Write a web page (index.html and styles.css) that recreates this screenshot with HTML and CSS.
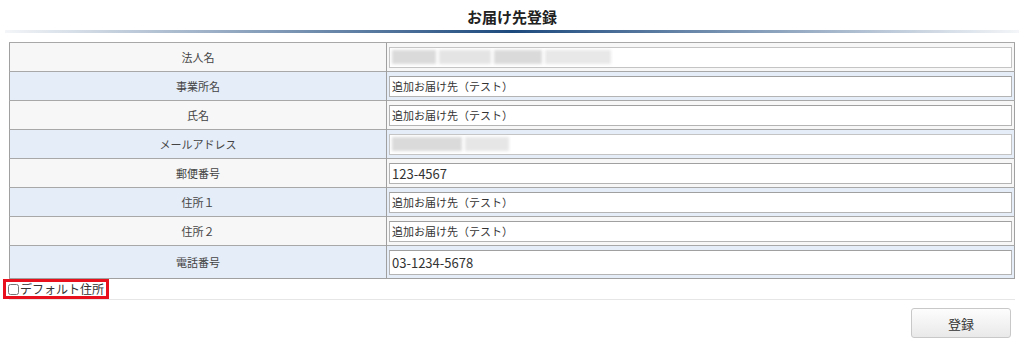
FILE: index.html
```html
<!DOCTYPE html>
<html lang="ja">
<head>
  <meta charset="UTF-8">
  <title>お届け先登録</title>
  <link rel="stylesheet" href="styles.css">
</head>
<body>
  <div class="page">
    <h1 class="page-title">お届け先登録</h1>
    <div class="title-rule"></div>

    <table class="form-table">
      <tr class="row-odd">
        <th>法人名</th>
        <td><div class="field masked"><span class="blur b1"></span><span class="blur b2"></span><span class="blur b3"></span><span class="blur b4"></span></div></td>
      </tr>
      <tr class="row-even">
        <th>事業所名</th>
        <td><input class="field" type="text" value="追加お届け先（テスト）"></td>
      </tr>
      <tr class="row-odd">
        <th>氏名</th>
        <td><input class="field" type="text" value="追加お届け先（テスト）"></td>
      </tr>
      <tr class="row-even">
        <th>メールアドレス</th>
        <td><div class="field masked"><span class="blur b5"></span><span class="blur b6"></span></div></td>
      </tr>
      <tr class="row-odd">
        <th>郵便番号</th>
        <td><input class="field num" type="text" value="123-4567"></td>
      </tr>
      <tr class="row-even">
        <th>住所１</th>
        <td><input class="field" type="text" value="追加お届け先（テスト）"></td>
      </tr>
      <tr class="row-odd">
        <th>住所２</th>
        <td><input class="field" type="text" value="追加お届け先（テスト）"></td>
      </tr>
      <tr class="row-even tall">
        <th>電話番号</th>
        <td><input class="field num big" type="text" value="03-1234-5678"></td>
      </tr>
    </table>

    <div class="default-row">
      <label class="default-check"><input type="checkbox">デフォルト住所</label>
    </div>

    <div class="actions">
      <button class="submit-btn">登録</button>
    </div>
  </div>
</body>
</html>
```

FILE: styles.css
```css
body {
  margin: 0;
  background: #fff;
  color: #333;
  font-family: "Noto Sans CJK JP", "Noto Sans", sans-serif;
}

.page {
  padding: 0 9px;
}

/* Title */
.page-title {
  margin: 0;
  padding: 7px 0 3px;
  font-size: 15px;
  line-height: 20px;
  text-align: center;
  color: #222;
}

.title-rule {
  height: 3px;
  margin: 0 -4px;
  background: linear-gradient(to right, rgba(30, 70, 120, 0.05), #1d4a7e 50%, rgba(30, 70, 120, 0.05));
}

/* Form table */
.form-table {
  width: 100%;
  margin-top: 9px;
  border-collapse: collapse;
  border: 1px solid #a0a0a0;
}

.form-table th,
.form-table td {
  border-top: 1px solid #a8a8a8;
  height: 28px;
  padding: 0;
}

.form-table th {
  width: 376px;
  font-size: 11px;
  font-weight: normal;
  color: #444;
  text-align: center;
}

.form-table td {
  border-left: 1px solid #a0a0a0;
  padding: 0 2px 0 2px;
}

.row-odd {
  background: #f7f7f7;
}

.row-even {
  background: #e5edf9;
}

.tall th,
.tall td {
  height: 32px;
}

.field {
  display: block;
  box-sizing: border-box;
  width: 100%;
  height: 21px;
  margin: 0;
  padding: 0 2px;
  border: 1px solid #b4b4b4;
  border-top-color: #a0a0a0;
  background: #fff;
  font-family: "Noto Sans CJK JP", "Noto Sans", sans-serif;
  font-size: 11px;
  color: #333;
}

.field.num {
  font-size: 13px;
}

.field.big {
  height: 25px;
}

/* blurred placeholder for masked values */
.masked {
  display: flex;
  align-items: center;
  gap: 3px;
  padding-left: 2px;
  border-color: #c4c4c4;
}

.blur {
  display: block;
  height: 14px;
  background: #dadada;
  filter: blur(1.5px);
}

.b1 { width: 44px; }
.b2 { width: 52px; background: #e4e4e4; }
.b3 { width: 48px; }
.b4 { width: 66px; background: #e8e8e8; }
.b5 { width: 70px; }
.b6 { width: 44px; background: #e6e6e6; }

/* Default address checkbox */
.default-row {
  display: flex;
  border-bottom: 1px solid #e6e6e6;
}

.default-check {
  display: flex;
  align-items: center;
  margin-left: -6px;
  padding: 0 2px 0 2px;
  height: 14px;
  border: 3px solid #e8101c;
  font-size: 12px;
  line-height: 14px;
  color: #333;
}

.default-check input {
  width: 11px;
  height: 11px;
  margin: 0 1px 0 0;
}

/* Submit */
.actions {
  display: flex;
  justify-content: flex-end;
  padding: 8px 4px 0 0;
}

.submit-btn {
  width: 100px;
  height: 30px;
  border: 1px solid #c8c8c8;
  border-radius: 3px;
  background: linear-gradient(to bottom, #fdfdfd, #e9e9e9);
  font-family: "Noto Sans CJK JP", "Noto Sans", sans-serif;
  font-size: 13px;
  color: #333;
  cursor: pointer;
}

.submit-btn:hover {
  opacity: 0.9;
}
```
